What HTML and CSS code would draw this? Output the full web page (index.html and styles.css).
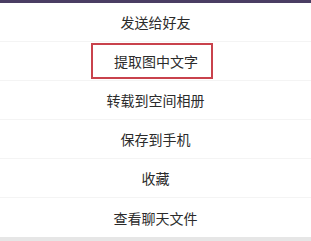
FILE: index.html
```html
<!DOCTYPE html>
<html lang="zh-CN">
<head>
    <meta charset="UTF-8">
    <meta name="viewport" content="width=device-width, initial-scale=1.0">
    <title>菜单</title>
    <link rel="stylesheet" href="styles.css">
</head>
<body>
    <div class="top-bar"></div>

    <ul class="menu">
        <li class="menu-item">发送给好友</li>
        <li class="menu-item"><span class="highlight">提取图中文字</span></li>
        <li class="menu-item">转载到空间相册</li>
        <li class="menu-item">保存到手机</li>
        <li class="menu-item">收藏</li>
        <li class="menu-item">查看聊天文件</li>
    </ul>

    <div class="bottom-bar"></div>
</body>
</html>
```

FILE: styles.css
```css
body {
    margin: 0;
    width: 311px;
    height: 241px;
    overflow: hidden;
    background: #fff;
    font-family: "Noto Sans CJK SC", "Noto Sans", sans-serif;
}

.top-bar {
    height: 3px;
    background: #4a3d63;
}

.menu {
    list-style: none;
    margin: 0;
    padding: 0;
}

.menu-item {
    height: 39px;
    display: flex;
    align-items: center;
    justify-content: center;
    font-size: 14px;
    color: #2b2b2b;
    border-bottom: 1px solid #f4f4f4;
    box-sizing: border-box;
}

.menu-item:last-child {
    border-bottom: none;
}

.highlight {
    box-sizing: border-box;
    width: 122px;
    height: 36px;
    display: flex;
    align-items: center;
    justify-content: center;
    border: 2px solid #c9424c;
    margin-left: -7px;
    padding-left: 8px;
}

.bottom-bar {
    height: 4px;
    background: #e6e6e6;
}
```
